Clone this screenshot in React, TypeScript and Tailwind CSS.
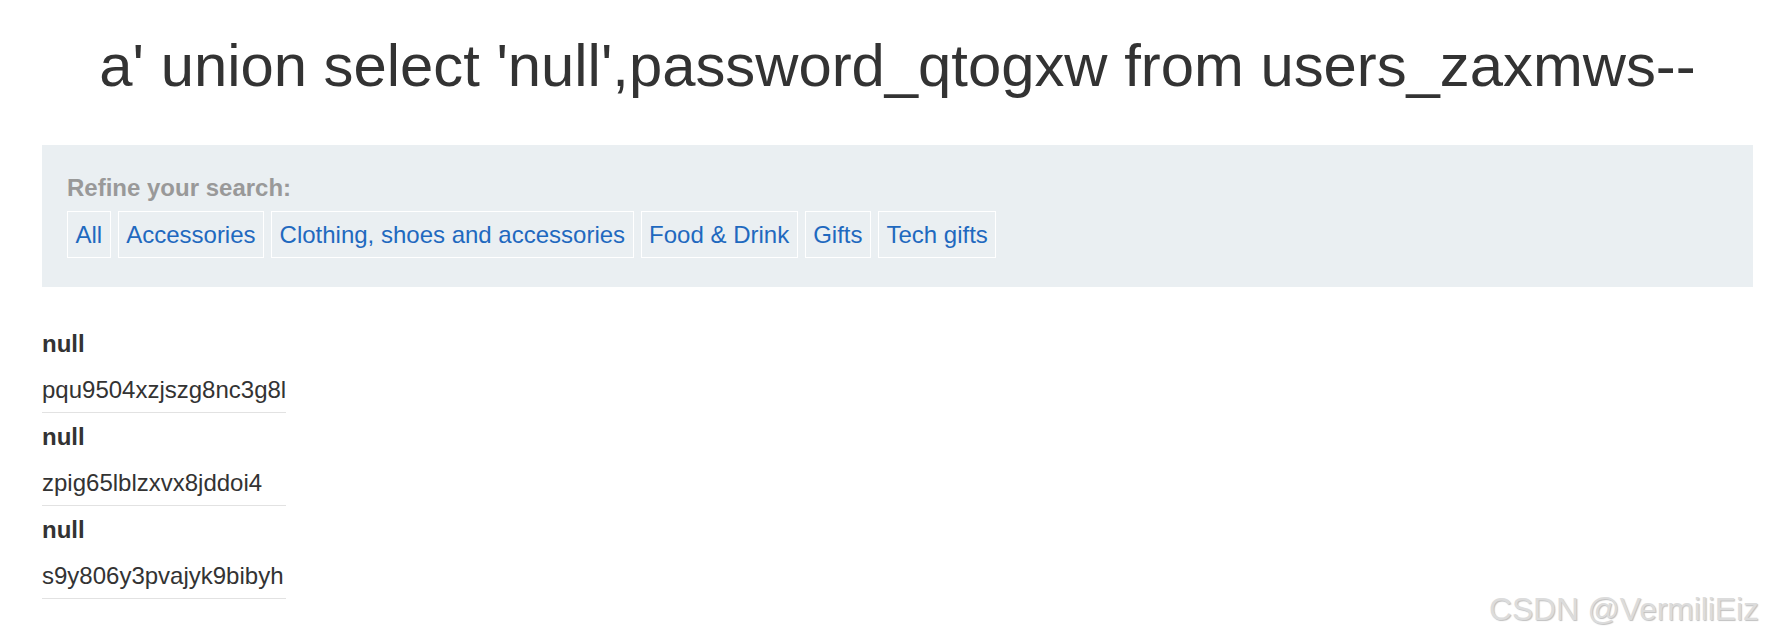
import React from 'react';

const categories = ['All', 'Accessories', 'Clothing, shoes and accessories', 'Food & Drink', 'Gifts', 'Tech gifts'];

const results = [
    { title: 'null', value: 'pqu9504xzjszg8nc3g8l' },
    { title: 'null', value: 'zpig65lblzxvx8jddoi4' },
    { title: 'null', value: 's9y806y3pvajyk9bibyh' },
];

const App = () => {
    return (
        <div className="relative h-[638px] w-full overflow-hidden bg-white font-['Liberation_Sans',Arial,sans-serif] text-[#333333]">
            <div className="ml-[42px] w-[1711px]">
                {/* Heading */}
                <h1 className="pt-[32px] mb-[45px] text-center text-[59.8px] leading-[68px] font-normal whitespace-nowrap">
                    a' union select 'null',password_qtogxw from users_zaxmws--
                </h1>

                {/* Filter panel */}
                <section className="bg-[#eaeff2] pt-[29px] pb-[29px] pl-[25px] text-[24px] leading-[27px]">
                    <p className="font-bold text-[#999999] mb-[10px]">Refine your search:</p>
                    <div className="flex gap-[7px]">
                        {categories.map((c) => (
                            <a key={c} href="#" className="border border-white px-[7.5px] py-[9px] text-[#1f69bf] whitespace-nowrap">
                                {c}
                            </a>
                        ))}
                    </div>
                </section>

                {/* Results table */}
                <div className="mt-[33px] w-fit text-[24px] leading-[27px]">
                    {results.map((r, i) => (
                        <div key={i} className="border-b border-[#e2e2e2]">
                            <div className="pt-[10px] pb-[9px] font-bold">{r.title}</div>
                            <div className="pt-[10px] pb-[9px]">{r.value}</div>
                        </div>
                    ))}
                </div>
            </div>

            {/* Watermark */}
            <div className="absolute left-[1489px] top-[591px] text-[31.7px] leading-[36px] text-[#dcdcdc] whitespace-nowrap [text-shadow:1px_1px_1px_rgba(0,0,0,0.25)]">
                CSDN @VermiliEiz
            </div>
        </div>
    );
};

export default App;
